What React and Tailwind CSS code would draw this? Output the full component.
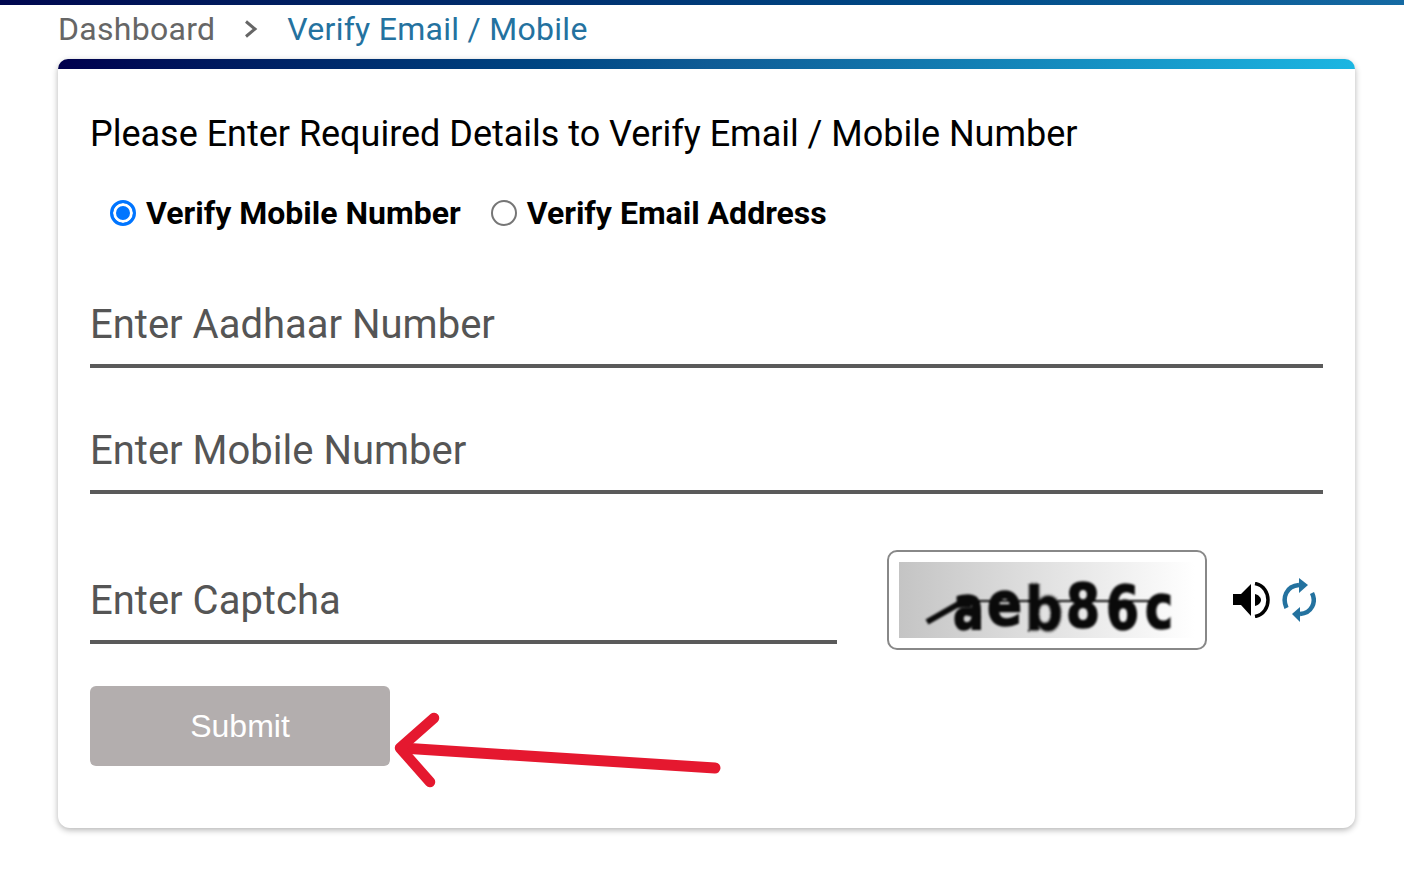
import { useState } from "react"

const inputClass =
  "w-full h-[80px] border-b-4 border-[#5a5a5a] bg-white text-[40px] text-[#333] outline-none placeholder:text-[#555] box-content"

const radioClass =
  "w-[26px] h-[26px] m-0 appearance-none rounded-full bg-white border-2 border-[#767676] checked:border-[3px] checked:border-[#0075ff] checked:bg-[#0075ff] checked:shadow-[inset_0_0_0_3px_white]"

// the captcha picture: warped letters with a line through them
function CaptchaImage() {
  return (
    <svg width="296" height="76" viewBox="0 0 296 76" className="block overflow-visible">
      <defs>
        <linearGradient id="captchaBg" x1="0" y1="0" x2="1" y2="0">
          <stop offset="0" stopColor="#c4c4c4" />
          <stop offset="1" stopColor="#ffffff" />
        </linearGradient>
      </defs>
      <rect width="296" height="76" fill="url(#captchaBg)" />
      <g
        className="blur-[0.8px]"
        fill="#0a0a0a"
        stroke="#0a0a0a"
        strokeWidth="1.6"
        fontFamily="'DejaVu Sans', sans-serif"
        fontWeight="700"
        fontSize="60"
      >
        <text x="54" y="67" textLength="31" lengthAdjust="spacingAndGlyphs">a</text>
        <text x="88" y="63" textLength="35" lengthAdjust="spacingAndGlyphs">e</text>
        <text
          x="126"
          y="68"
          textLength="38"
          lengthAdjust="spacingAndGlyphs"
          strokeWidth="3.5"
          strokeDasharray="1 2"
        >
          b
        </text>
        <text x="167" y="65" textLength="34" lengthAdjust="spacingAndGlyphs">8</text>
        <text x="207" y="67" textLength="33" lengthAdjust="spacingAndGlyphs">6</text>
        <text x="246" y="66" textLength="28" lengthAdjust="spacingAndGlyphs">c</text>
        <path d="M28 60 L58 43 L72 42" strokeWidth="6" fill="none" />
        <path d="M60 50 L82 56" strokeWidth="2.5" fill="none" />
        <path d="M76 39 L252 39" strokeWidth="2" fill="none" />
      </g>
    </svg>
  )
}

function SpeakerIcon() {
  return (
    <svg width="38" height="36" viewBox="0 0 38 36" className="block">
      <path d="M0 12 H8 L18 2 V34 L8 23 H0 Z" fill="#000" />
      <path d="M22 12 C26 13 28 16 28 18 C28 20 26 23 22 24 Z" fill="#000" />
      <path d="M22 1.5 C31 3 35 11 35 18 C35 25 31 33 22 34.5" stroke="#000" strokeWidth="3.5" fill="none" />
    </svg>
  )
}

function RefreshIcon() {
  return (
    <svg width="34" height="44" viewBox="0 0 34 44" className="block">
      <path d="M4.5 30 C0 20 4 8 17 7" stroke="#24729f" strokeWidth="4.5" fill="none" />
      <path d="M17 0 L26 7 L17 15 Z" fill="#24729f" />
      <path d="M30 15 C34.5 24 30 35 18 36" stroke="#24729f" strokeWidth="4.5" fill="none" />
      <path d="M18 29 L10 36 L18 44 Z" fill="#24729f" />
    </svg>
  )
}

function App() {
  const [mode, setMode] = useState("mobile")

  return (
    <div className="min-h-[875px] bg-white font-['Roboto',sans-serif]">
      <div className="h-[5px] bg-gradient-to-r from-[#00074f] to-[#156aa3]" />

      {/* Breadcrumb */}
      <div className="h-[54px] pl-[58px] flex items-start pt-[3px] text-[32px] leading-[42px] tracking-[0.28px]">
        <span className="text-[#666]">Dashboard</span>
        <svg width="16" height="18" viewBox="0 0 16 18" className="ml-[28px] mr-[28px] mt-[12px]">
          <path d="M3 1.5 L12 9 L3 16.5" stroke="#666" strokeWidth="3" fill="none" />
        </svg>
        <span className="text-[#24729f]">Verify Email / Mobile</span>
      </div>

      {/* Card */}
      <div className="ml-[58px] w-[1297px] rounded-xl bg-white shadow-[0_2px_6px_rgba(0,0,0,0.3)]">
        <div className="h-[10px] rounded-t-xl bg-gradient-to-r from-[#00004d] via-[#0f5b95] to-[#1cb6e2]" />
        <div className="px-8 pt-[37px] pb-[62px]">
          <h1 className="h-[54px] text-[36px] leading-[56px] tracking-[-0.015px] text-black font-normal">
            Please Enter Required Details to Verify Email / Mobile Number
          </h1>

          <div className="mt-[33px] h-[40px] ml-[20px] flex items-center text-[32px] font-bold text-black">
            <label className="flex items-center">
              <input
                type="radio"
                name="verify"
                checked={mode === "mobile"}
                onChange={() => setMode("mobile")}
                className={radioClass}
              />
              <span className="ml-[10px]">Verify Mobile Number</span>
            </label>
            <label className="flex items-center ml-[30px]">
              <input
                type="radio"
                name="verify"
                checked={mode === "email"}
                onChange={() => setMode("email")}
                className={radioClass}
              />
              <span className="ml-[10px]">Verify Email Address</span>
            </label>
          </div>

          <div className="mt-[51px]">
            <input placeholder="Enter Aadhaar Number" className={inputClass} />
          </div>
          <div className="mt-[42px]">
            <input placeholder="Enter Mobile Number" className={inputClass} />
          </div>

          <div className="mt-[56px] flex items-start">
            <div className="w-[747px] mt-[10px]">
              <input placeholder="Enter Captcha" className={inputClass} />
            </div>
            <div className="ml-[50px] w-[320px] h-[100px] rounded-[10px] border-2 border-[#888] p-[10px]">
              <CaptchaImage />
            </div>
            <div className="ml-[26px] mt-[32px]">
              <SpeakerIcon />
            </div>
            <div className="ml-[11px] mt-[28px]">
              <RefreshIcon />
            </div>
          </div>

          <div className="relative mt-[36px] w-[300px]">
            <button className="w-[300px] h-[80px] rounded-md bg-[#b3aeae] text-white text-[32px] font-['Liberation_Sans',sans-serif]">
              Submit
            </button>
            {/* red annotation arrow */}
            <svg
              width="340"
              height="80"
              viewBox="0 0 340 80"
              className="absolute left-[300px] top-[26px] pointer-events-none"
            >
              <path
                d="M325 56 L12 36"
                stroke="#e5182f"
                strokeWidth="11"
                strokeLinecap="round"
                fill="none"
              />
              <path
                d="M44 6 L10 36 L40 70"
                stroke="#e5182f"
                strokeWidth="10.5"
                strokeLinecap="round"
                strokeLinejoin="round"
                fill="none"
              />
            </svg>
          </div>
        </div>
      </div>
    </div>
  )
}

export default App
